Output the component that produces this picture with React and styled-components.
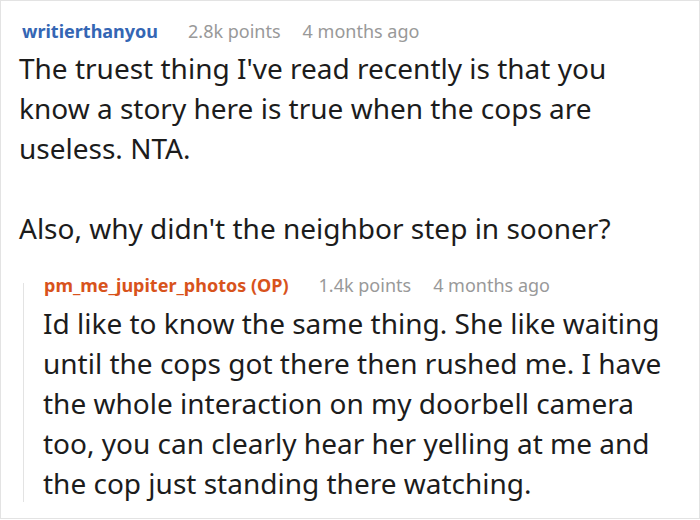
import React from "react";
import styled, { createGlobalStyle } from "styled-components";

const Global = createGlobalStyle`
  html, body { margin: 0; padding: 0; background: #fff; }
  body { font-family: "Noto Sans", "Open Sans", sans-serif; }
  * { box-sizing: border-box; }
`;

const Card = styled.div`
  width: 700px;
  height: 519px;
  border: 1px solid #e3e3e3;
  padding: 18px 18px 0 18px;
  overflow: hidden;
  background: #fff;
`;

const Header = styled.div`
  display: flex;
  align-items: baseline;
  height: 24px;
  line-height: 24px;
  font-size: 18px;
  padding-left: 3px;
  white-space: nowrap;
`;

const Name = styled.span`
  font-weight: 700;
  color: ${(p) => (p.$op ? "#d8531c" : "#3466b4")};
  margin-right: 30px;
`;

const Meta = styled.span`
  color: #999;
  margin-right: 22px;
`;

const Body = styled.div`
  margin-top: 5px;
  font-size: 28px;
  line-height: 40px;
  color: #1c1c1c;
`;

const Para = styled.p`
  margin: 0;
  & + & { margin-top: 40px; }
`;

const Reply = styled.div`
  position: relative;
  margin-top: 25px;
  margin-left: 4px;
  padding-left: 20px;

  &::before {
    content: "";
    position: absolute;
    left: 0;
    top: 10px;
    bottom: 1px;
    width: 1px;
    background: #e3e3e3;
  }
`;

const ReplyHeader = styled(Header)`
  padding-left: 1px;
`;

const ReplyBody = styled(Body)`
  margin-top: 6px;
`;

function CommentHeader({ name, points, ago, op, as: As = Header }) {
  return (
    <As>
      <Name $op={op}>{name}</Name>
      <Meta>{points}</Meta>
      <Meta>{ago}</Meta>
    </As>
  );
}

export default function App() {
  return (
    <>
      <Global />
      <Card>
        <CommentHeader name="writierthanyou" points="2.8k points" ago="4 months ago" />
        <Body>
          <Para>
            The truest thing I've read recently is that you know a story here is
            true when the cops are useless. NTA.
          </Para>
          <Para>Also, why didn't the neighbor step in sooner?</Para>
        </Body>
        <Reply>
          <CommentHeader
            as={ReplyHeader}
            name="pm_me_jupiter_photos (OP)"
            points="1.4k points"
            ago="4 months ago"
            op
          />
          <ReplyBody>
            <Para>
              Id like to know the same thing. She like waiting until the cops got
              there then rushed me. I have the whole interaction on my doorbell
              camera too, you can clearly hear her yelling at me and the cop just
              standing there watching.
            </Para>
          </ReplyBody>
        </Reply>
      </Card>
    </>
  );
}
